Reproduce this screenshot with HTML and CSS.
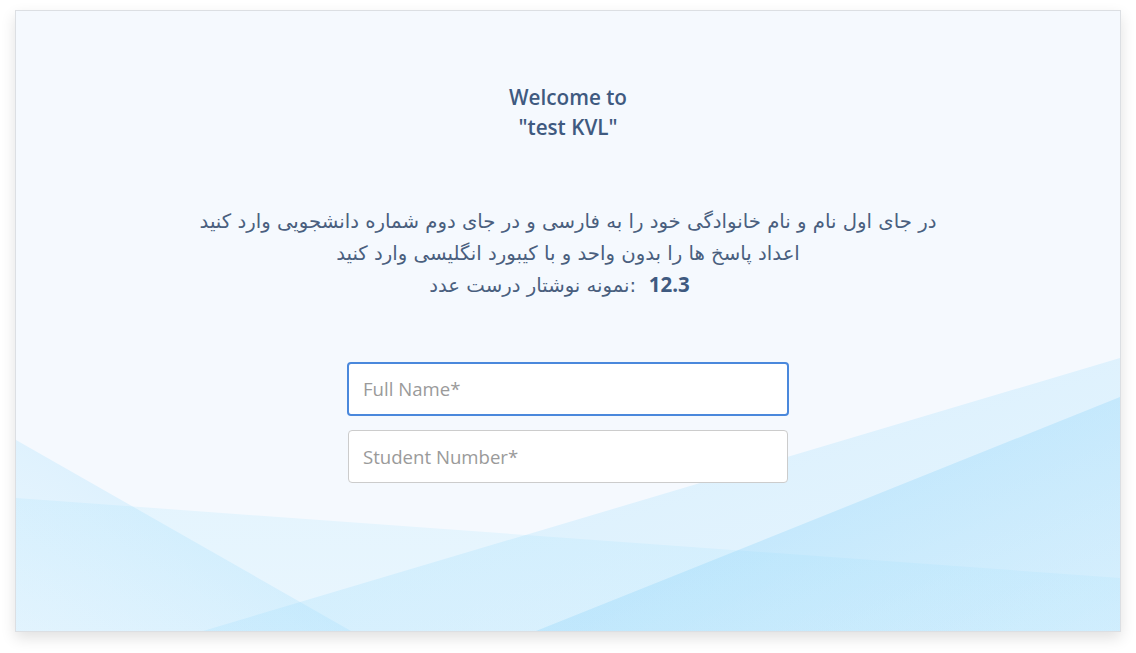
FILE: index.html
```html
<!DOCTYPE html>
<html lang="en">
<head>
<meta charset="utf-8">
<title>test KVL</title>
<link rel="stylesheet" href="styles.css">
</head>
<body>
<div class="card">
  <svg class="bg" viewBox="0 0 1104 620" preserveAspectRatio="none" aria-hidden="true">
    <defs>
      <linearGradient id="gA" x1="0" y1="0" x2="1" y2="1">
        <stop offset="0" stop-color="#9bdcfc" stop-opacity="0.35"/>
        <stop offset="1" stop-color="#9bdcfc" stop-opacity="0.15"/>
      </linearGradient>
      <linearGradient id="gB" x1="0" y1="0" x2="1" y2="1">
        <stop offset="0" stop-color="#7fcdf8" stop-opacity="0.45"/>
        <stop offset="1" stop-color="#9bdcfc" stop-opacity="0.2"/>
      </linearGradient>
      <linearGradient id="gC" x1="1" y1="0" x2="0" y2="1">
        <stop offset="0" stop-color="#8fd6fb" stop-opacity="0.4"/>
        <stop offset="1" stop-color="#b8e6fd" stop-opacity="0.15"/>
      </linearGradient>
      <linearGradient id="gD" x1="0" y1="0" x2="0" y2="1">
        <stop offset="0" stop-color="#c5ecfd" stop-opacity="0.35"/>
        <stop offset="1" stop-color="#c5ecfd" stop-opacity="0.25"/>
      </linearGradient>
    </defs>
    <polygon points="0,487 1104,567 1104,620 0,620" fill="url(#gD)"/>
    <polygon points="1104,347 1104,620 187,620" fill="url(#gA)"/>
    <polygon points="1104,386 1104,620 520,620" fill="url(#gB)"/>
    <polygon points="0,429 335,620 0,620" fill="url(#gC)"/>
  </svg>
  <div class="content">
    <h1 class="title">Welcome to<br>"test KVL"</h1>
    <p class="desc"><span class="line" dir="rtl">در جای اول نام و نام خانوادگی خود را به فارسی و در جای دوم شماره دانشجویی وارد کنید</span><span class="line" dir="rtl">اعداد پاسخ ها را بدون واحد و با کیبورد انگلیسی وارد کنید</span><span class="line"><bdi dir="rtl">نمونه نوشتار درست عدد</bdi>:&nbsp;&nbsp;<b class="num">12.3</b></span></p>
    <form class="fields">
      <input class="field focused" type="text" placeholder="Full Name*" autofocus>
      <input class="field" type="text" placeholder="Student Number*">
    </form>
  </div>
</div>
</body>
</html>
```

FILE: styles.css
```css
html, body {
  margin: 0;
  padding: 0;
  background: #ffffff;
}

body {
  padding: 10px 15px 22px 15px;
  font-family: "Open Sans", "DejaVu Sans", sans-serif;
}

.card {
  position: relative;
  height: 620px;
  background: #f5f9fe;
  border: 1px solid #dcdfe3;
  box-shadow: 0 6px 14px rgba(0, 0, 0, 0.12);
  overflow: hidden;
}

.bg {
  position: absolute;
  left: 0;
  top: 0;
  width: 100%;
  height: 100%;
}

.content {
  position: relative;
  display: flex;
  flex-direction: column;
  align-items: center;
  padding-top: 71px;
}

.title {
  margin: 0;
  font-size: 20.7px;
  line-height: 30px;
  font-weight: 600;
  color: #3f5a80;
  text-align: center;
}

.desc {
  margin: 64px 0 0;
  display: flex;
  flex-direction: column;
  align-items: center;
  font-family: "DejaVu Sans", "Open Sans", sans-serif;
  font-size: 19.7px;
  line-height: 31.5px;
  color: #4a5f7e;
  text-align: center;
}

.line {
  display: block;
}

.num {
  padding-right: 17px;
  font-family: "Open Sans", sans-serif;
  font-weight: 700;
  font-size: 20.5px;
  color: #3f5a80;
}

.fields {
  margin-top: 60px;
  display: flex;
  flex-direction: column;
  align-items: center;
  gap: 14px;
  width: 442px;
}

.field {
  box-sizing: border-box;
  width: 440px;
  height: 53px;
  padding: 0 14px;
  border: 1px solid #cccccc;
  border-radius: 4px;
  background: #ffffff;
  font-family: "Open Sans", sans-serif;
  font-size: 18.6px;
  color: #333;
  outline: none;
}

.field::placeholder {
  color: #9a9a9a;
}

.field.focused {
  width: 442px;
  height: 54px;
  border: 2px solid #4a88dc;
  padding-left: 14px;
  caret-color: #000;
}
```
